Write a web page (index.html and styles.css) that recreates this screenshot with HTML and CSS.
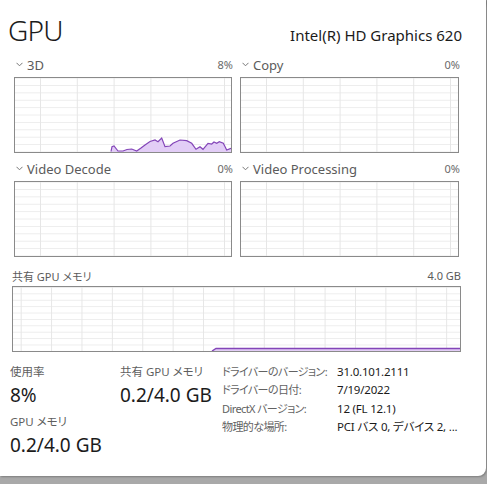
FILE: index.html
```html
<!DOCTYPE html>
<html lang="ja">
<head>
<meta charset="utf-8">
<title>GPU</title>
<link rel="stylesheet" href="styles.css">
</head>
<body>
<div class="panel">
  <div class="header">
    <div class="title">GPU</div>
    <div class="model">Intel(R) HD Graphics 620</div>
  </div>

  <div class="engines">
    <div class="engine">
      <div class="elabel">
        <span class="ename"><svg class="chev" width="7" height="5" viewBox="0 0 7 5"><polyline points="0.5,0.8 3.5,3.8 6.5,0.8" fill="none" stroke="#777" stroke-width="1"/></svg>3D</span>
        <span class="epct">8%</span>
      </div>
      <div class="chart chart-small">
        <svg class="plot" viewBox="0 0 216 74" preserveAspectRatio="none">
          <path d="M96,74 L96,73.5 L97,68.7 L99,68 L103,73 L108,73 L112,71.5 L116.7,71 L121.7,73 L126,70 L130,67 L135,63.5 L140,62 L143,63.7 L146.7,60 L150,68.7 L155,68 L158,65.3 L165,62 L171.7,62.7 L176.7,65.3 L181,71.3 L185,68.7 L188,71.3 L193,65.3 L196.7,66 L199,64 L201.7,65.3 L204.3,63.7 L208.3,65.3 L211.7,72 L216,70.3 L216,74 Z" fill="#e2cdf6" stroke="none"/>
          <polyline points="96,73.5 97,68.7 99,68 103,73 108,73 112,71.5 116.7,71 121.7,73 126,70 130,67 135,63.5 140,62 143,63.7 146.7,60 150,68.7 155,68 158,65.3 165,62 171.7,62.7 176.7,65.3 181,71.3 185,68.7 188,71.3 193,65.3 196.7,66 199,64 201.7,65.3 204.3,63.7 208.3,65.3 211.7,72 216,70.3" fill="none" stroke="#8345b8" stroke-width="1.2"/>
        </svg>
      </div>
    </div>
    <div class="engine">
      <div class="elabel">
        <span class="ename"><svg class="chev" width="7" height="5" viewBox="0 0 7 5"><polyline points="0.5,0.8 3.5,3.8 6.5,0.8" fill="none" stroke="#777" stroke-width="1"/></svg>Copy</span>
        <span class="epct">0%</span>
      </div>
      <div class="chart chart-small"></div>
    </div>
    <div class="engine">
      <div class="elabel">
        <span class="ename"><svg class="chev" width="7" height="5" viewBox="0 0 7 5"><polyline points="0.5,0.8 3.5,3.8 6.5,0.8" fill="none" stroke="#777" stroke-width="1"/></svg>Video Decode</span>
        <span class="epct">0%</span>
      </div>
      <div class="chart chart-small"></div>
    </div>
    <div class="engine">
      <div class="elabel">
        <span class="ename"><svg class="chev" width="7" height="5" viewBox="0 0 7 5"><polyline points="0.5,0.8 3.5,3.8 6.5,0.8" fill="none" stroke="#777" stroke-width="1"/></svg>Video Processing</span>
        <span class="epct">0%</span>
      </div>
      <div class="chart chart-small"></div>
    </div>
  </div>

  <div class="shared">
    <div class="slabel">
      <span>共有 GPU メモリ</span>
      <span>4.0 GB</span>
    </div>
    <div class="chart chart-wide">
      <svg class="plot" viewBox="0 0 447 64" preserveAspectRatio="none">
        <path d="M199,64 L203,61.5 L447,61.5 L447,64 Z" fill="#e2cdf6"/>
        <polyline points="199,64 203,61.5 447,61.5" fill="none" stroke="#8345b8" stroke-width="1.4"/>
      </svg>
    </div>
  </div>

  <div class="stats">
    <div class="scol scol1">
      <div class="slab">使用率</div>
      <div class="sval">8%</div>
      <div class="slab slab2">GPU メモリ</div>
      <div class="sval">0.2/4.0 GB</div>
    </div>
    <div class="scol scol2">
      <div class="slab">共有 GPU メモリ</div>
      <div class="sval">0.2/4.0 GB</div>
    </div>
    <div class="info">
      <div class="ik">ドライバーのバージョン:</div><div class="iv">31.0.101.2111</div>
      <div class="ik">ドライバーの日付:</div><div class="iv">7/19/2022</div>
      <div class="ik">DirectX バージョン:</div><div class="iv">12 (FL 12.1)</div>
      <div class="ik">物理的な場所:</div><div class="iv">PCI バス 0, デバイス 2, ...</div>
    </div>
  </div>
</div>
</body>
</html>
```

FILE: styles.css
```css
html, body {
  margin: 0;
  padding: 0;
}
body {
  width: 487px;
  height: 484px;
  overflow: hidden;
  background: linear-gradient(to bottom, #8f8f8f 0px, #a9a9a9 8px);
  font-family: "Noto Sans", "Noto Sans CJK JP", sans-serif;
  font-feature-settings: "palt";
  color: #1b1b1b;
}
.panel {
  width: 486px;
  height: 476px;
  background: #fff;
  border-bottom-right-radius: 8px;
  box-shadow: 1px 1px 2px rgba(0,0,0,0.25);
  box-sizing: border-box;
  padding-top: 12px;
}
.header {
  display: flex;
  justify-content: space-between;
  align-items: baseline;
  height: 37px;
  padding-left: 8px;
  padding-right: 24px;
}
.title {
  font-size: 28px;
  line-height: 37px;
  font-weight: 300;
  letter-spacing: -0.8px;
}
.model {
  font-size: 15px;
  line-height: 37px;
}
.engines {
  display: grid;
  grid-template-columns: 218px 219px;
  column-gap: 8px;
  padding-left: 14px;
}
.elabel {
  display: flex;
  justify-content: space-between;
  align-items: center;
  height: 25px;
  padding-top: 3px;
  color: #5b5b5b;
}
.ename {
  display: flex;
  align-items: center;
  font-size: 13px;
}
.chev {
  margin-left: 2px;
  margin-right: 4px;
}
.epct {
  font-size: 11px;
  margin-right: -1px;
  color: #6a6a6a;
}
.chart {
  position: relative;
  box-sizing: border-box;
  border: 1px solid #8a8a8a;
  background-color: #fff;
}
.chart-small {
  height: 76px;
  background-image:
    linear-gradient(to right, #e6e6e6 1px, transparent 1px),
    linear-gradient(to bottom, #ececec 1px, transparent 1px);
  background-size: 36.8px 100%, 100% 7.4px;
  background-position: 25px 0, 0 7px;
}
.plot {
  display: block;
  width: 100%;
  height: 100%;
}
.shared {
  padding-left: 12px;
  padding-right: 25px;
}
.slabel {
  display: flex;
  justify-content: space-between;
  align-items: center;
  height: 21px;
  padding-top: 8px;
  font-size: 11px;
  color: #5b5b5b;
}
.chart-wide {
  height: 66px;
  background-image:
    linear-gradient(to right, #e6e6e6 1px, transparent 1px),
    linear-gradient(to bottom, #ececec 1px, transparent 1px);
  background-size: 30.4px 100%, 100% 6.4px;
  background-position: 7.7px 0, 0 6.4px;
}
.stats {
  display: flex;
  align-items: flex-start;
  margin-top: 11px;
  padding-left: 10px;
}
.scol1 {
  width: 110px;
}
.scol2 {
  width: 102px;
}
.slab {
  font-size: 11.5px;
  line-height: 18px;
  color: #5f5f5f;
  white-space: nowrap;
}
.slab2 {
  margin-top: 4px;
}
.sval {
  font-size: 19px;
  line-height: 28px;
  color: #1b1b1b;
  white-space: nowrap;
}
.info {
  display: grid;
  grid-template-columns: 115px auto;
  grid-auto-rows: 18.3px;
  font-size: 11.5px;
  line-height: 18.3px;
  white-space: nowrap;
}
.ik {
  color: #626262;
  letter-spacing: -0.6px;
  font-size: 11px;
}
.iv {
  color: #1b1b1b;
  letter-spacing: -0.2px;
}
```
